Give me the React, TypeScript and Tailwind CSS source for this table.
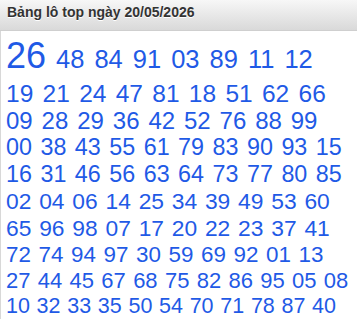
import React from "react";

type Row = { nums: string[]; cls: string };

const rows: Row[] = [
  { nums: ["19", "21", "24", "47", "81", "18", "51", "62", "66"], cls: "text-[24.5px] leading-[27px] gap-x-[9.3px]" },
  { nums: ["09", "28", "29", "36", "42", "52", "76", "88", "99"], cls: "text-[24px] leading-[27px] gap-x-[8.9px]" },
  { nums: ["00", "38", "43", "55", "61", "79", "83", "90", "93", "15"], cls: "text-[23.3px] leading-[27px] gap-x-[8.5px]" },
  { nums: ["16", "31", "46", "56", "63", "64", "73", "77", "80", "85"], cls: "text-[23.3px] leading-[27px] gap-x-[8.5px]" },
  { nums: ["02", "04", "06", "14", "25", "34", "39", "49", "53", "60"], cls: "text-[22.8px] leading-[27px] gap-x-[7.8px]" },
  { nums: ["65", "96", "98", "07", "17", "20", "22", "23", "37", "41"], cls: "text-[22.8px] leading-[26px] gap-x-[7.8px]" },
  { nums: ["72", "74", "94", "97", "30", "59", "69", "92", "01", "13"], cls: "text-[22.4px] leading-[27px] gap-x-[7.6px]" },
  { nums: ["27", "44", "45", "67", "68", "75", "82", "86", "95", "05", "08"], cls: "text-[22px] leading-[25.5px] gap-x-[7.3px]" },
  { nums: ["10", "32", "33", "35", "50", "54", "70", "71", "78", "87", "40"], cls: "text-[21.5px] leading-[24px] gap-x-[6.7px]" },
  { nums: ["57", "58"], cls: "text-[21px] leading-[24px] gap-x-[6.7px]" },
];

const first = ["48", "84", "91", "03", "89", "11", "12"];

export default function App() {
  return (
    <div className="w-[357px] h-[319px] overflow-hidden bg-white font-['Liberation_Sans',Arial,sans-serif]">
      <div className="h-[31px] border-b border-[#cfcfcf] bg-gradient-to-b from-[#f7f7f7] to-[#d9d9d9] pl-[7px] text-[14px] leading-[25px] font-bold text-[#333333] [text-shadow:0_1px_0_#ffffff] whitespace-nowrap">
        Bảng lô top ngày 20/05/2026
      </div>
      <div className="border-l border-[#d8d8d8] pl-[5px] pt-[7px] text-[#1f5ae6] whitespace-nowrap h-[288px]">
        <div className="flex items-baseline h-[42px] gap-x-[10px]">
          <span className="text-[36px] leading-none">26</span>
          {first.map((n) => (
            <span key={n} className="text-[25.5px] leading-none">
              {n}
            </span>
          ))}
        </div>
        {rows.map((r, i) => (
          <div key={i} className={`flex ${r.cls}`}>
            {r.nums.map((n) => (
              <span key={n}>{n}</span>
            ))}
          </div>
        ))}
      </div>
    </div>
  );
}
